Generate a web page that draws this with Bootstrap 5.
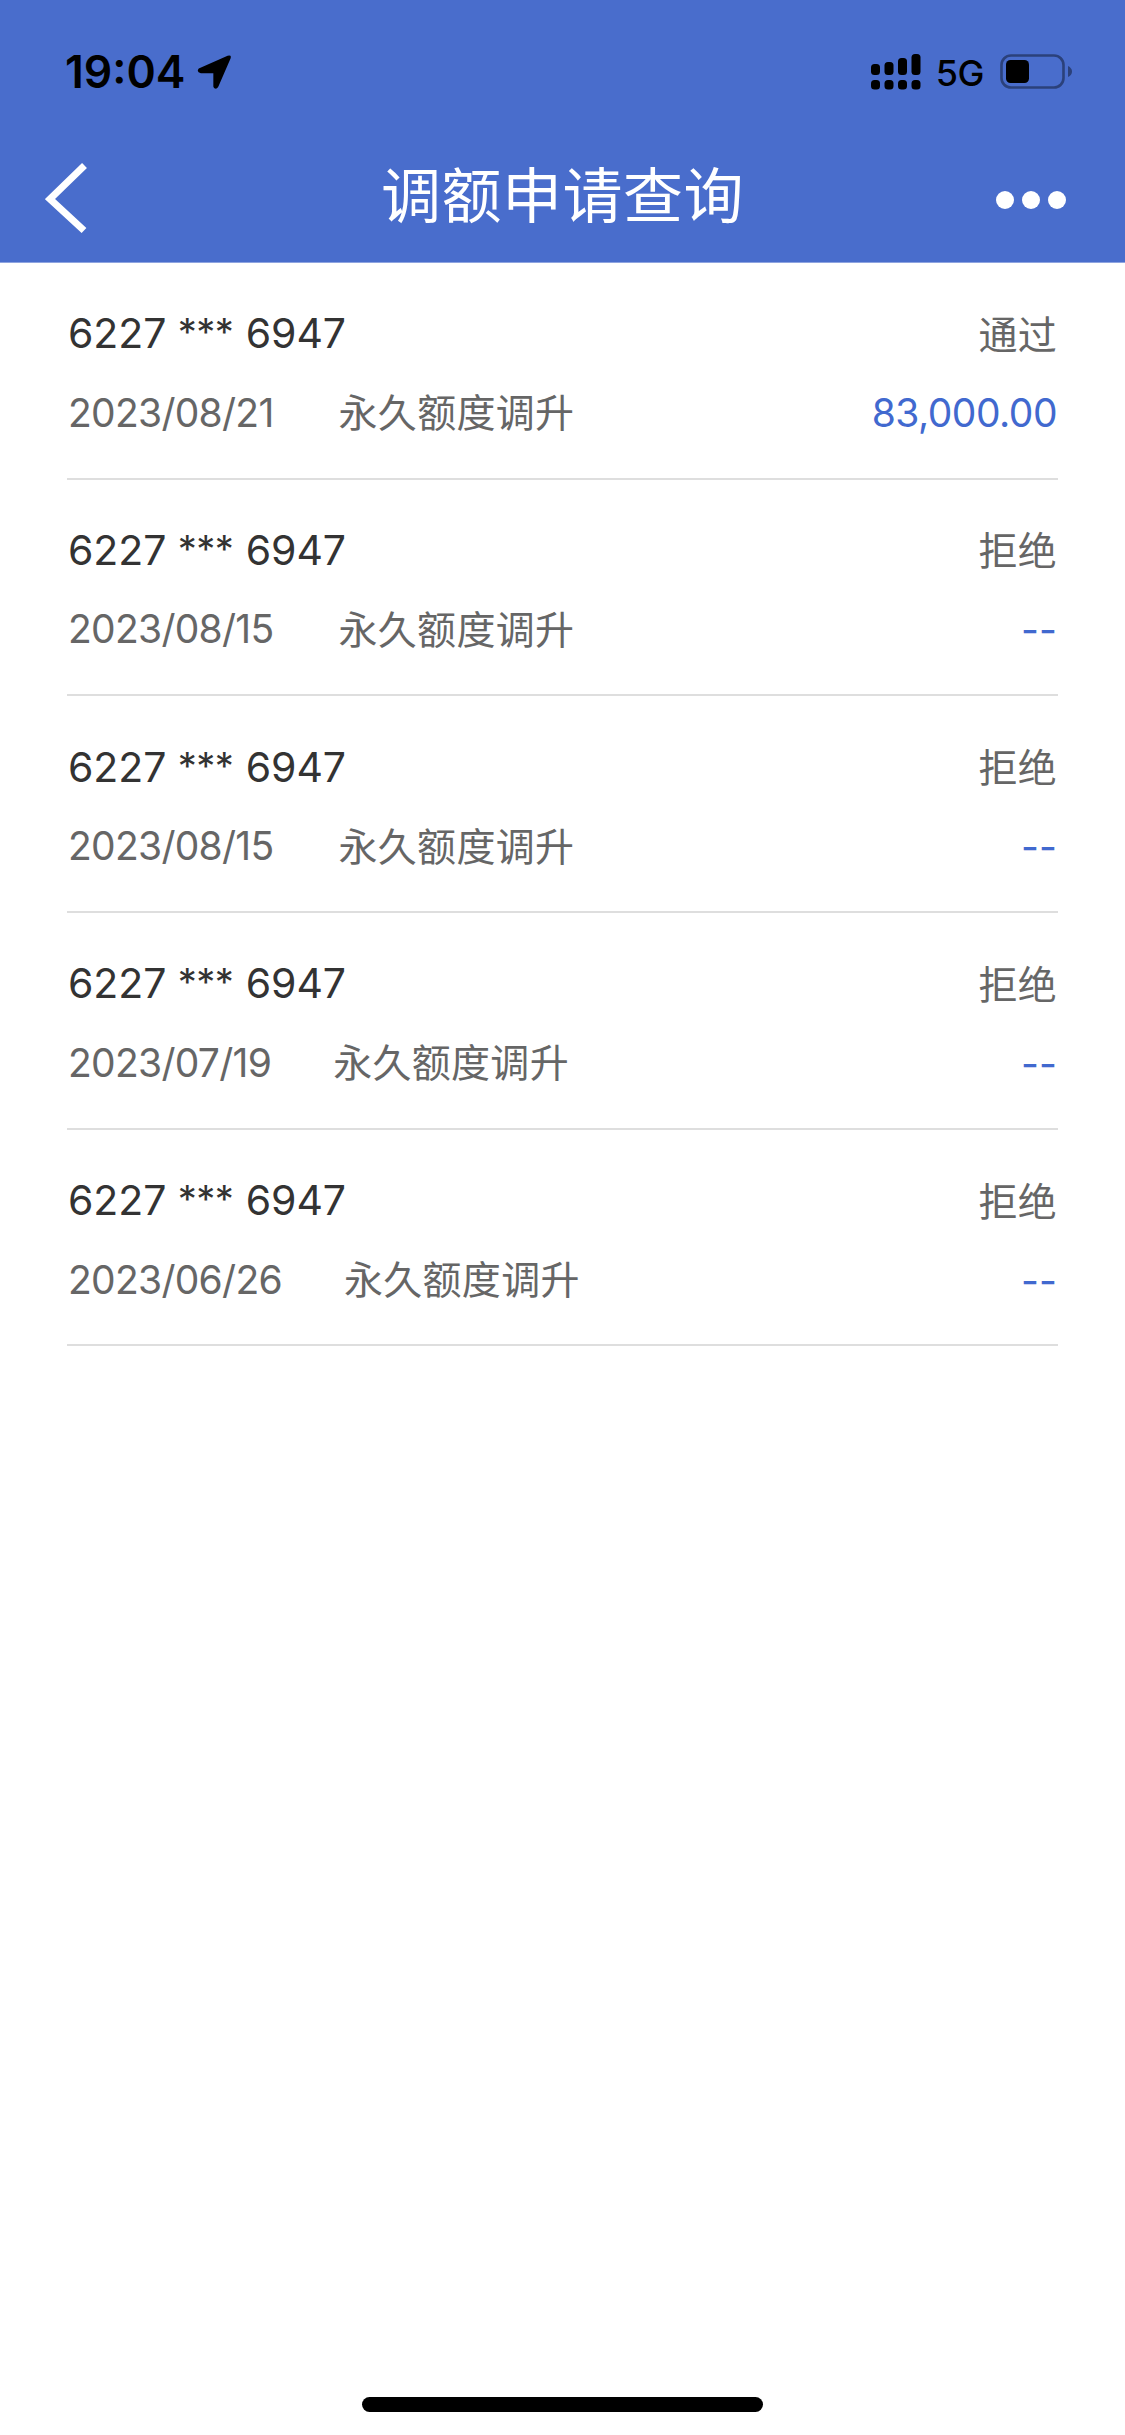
<!DOCTYPE html>
<html lang="zh-CN">
<head>
<meta charset="utf-8">
<meta name="viewport" content="width=device-width, initial-scale=1">
<title>调额申请查询</title>
<link href="https://cdn.jsdelivr.net/npm/bootstrap@5.3.0/dist/css/bootstrap.min.css" rel="stylesheet">
<style>
body{font-family:Inter,"Noto Sans CJK SC",sans-serif;color:#333;background:#fff;overflow-x:hidden}
.app-top{background:#496dcc;height:263px;border-bottom:1px solid #8ea4e0}
.status-bar{height:140px;padding:3px 53px 0 65px;color:#000}
.clock-text{font-size:44.5px;font-weight:600;line-height:1;padding-top:2px}
.net-text{font-size:36px;font-weight:500;line-height:1;margin-left:15px;margin-right:16px;letter-spacing:-.5px;padding-top:2px}
.title-bar{height:116px;padding:0 59px 0 45px}
.title-text{font-family:"Noto Sans CJK SC",sans-serif;font-size:60px;letter-spacing:.5px;line-height:1;padding-bottom:12px}
.side-slot{width:94px}
.side-slot:first-child{width:108px}
.records{padding:0 67px}
.record{height:216.7px;border-bottom:2px solid #dedede;padding-top:41px}
.line-a,.line-b{height:60px}
.line-b{margin-top:19px;color:#666}
.card-no{font-size:41px;letter-spacing:-.1px;color:#333;padding-left:1px}
.mask-stars{font-size:38px;line-height:1;letter-spacing:-.5px;vertical-align:2px;margin-right:1px}
.cn-text{font-family:"Noto Sans CJK SC",sans-serif;font-size:39px;letter-spacing:.3px;color:#666;padding-bottom:5px}
.line-a .cn-text{padding-right:1px;padding-bottom:4px}
.date-text{font-size:39px;letter-spacing:-.72px;margin-right:65px;padding-left:1px}
.date-narrow{margin-right:62px}
.amount{font-size:39px;color:#4169cf;letter-spacing:-.5px;padding-right:1px}
.amount-none{letter-spacing:0;padding-top:2px}
.home-bar{width:401px;height:15px;border-radius:8px;background:#000;margin-bottom:23px}
</style>
<script src="https://cdn.jsdelivr.net/npm/bootstrap@5.3.0/dist/js/bootstrap.bundle.min.js"></script>
</head>
<body>
<div class="d-flex flex-column min-vh-100">
<header class="app-top">
  <div class="status-bar d-flex align-items-center justify-content-between">
    <div class="d-flex align-items-center">
      <span class="clock-text">19:04</span>
      <svg class="ms-2 ps-1" width="39" height="36" viewBox="0 0 36 36"><path d="M31.500 1.200Q35.800 0 34.500 4L22 33Q20.500 36.500 17.500 34.500L16.800 33V19.300H4Q-1 18.200 1.800 14.500Z"/></svg>
    </div>
    <div class="d-flex align-items-center">
      <svg width="50" height="36" viewBox="0 0 50 36"><rect x="0" y="10" width="9" height="11" rx="3.500"/><rect x="13.500" y="8" width="9" height="13" rx="3.500"/><rect x="27" y="4" width="9" height="17" rx="3.500"/><rect x="40.500" y="0" width="9" height="21" rx="3.500"/><rect x="0" y="26" width="9" height="9.500" rx="3.500"/><rect x="13.500" y="26" width="9" height="9.500" rx="3.500"/><rect x="27" y="26" width="9" height="9.500" rx="3.500"/><rect x="40.500" y="26" width="9" height="9.500" rx="3.500"/></svg>
      <span class="net-text">5G</span>
      <svg width="72" height="35" viewBox="0 0 72 35"><rect x="1.500" y="1.500" width="62" height="32" rx="9.500" fill="none" stroke="#2b417b" stroke-width="2.600"/><rect x="6" y="6" width="23" height="23" rx="4.500"/><path d="M68 12Q72 14 72 17.500T68 23Z" fill="#2b417b"/></svg>
    </div>
  </div>
  <nav class="title-bar d-flex align-items-center justify-content-between text-white">
    <div class="side-slot"><svg width="44" height="74" viewBox="0 0 44 74"><path d="M39.500 4.500L5 38L39 69.500" fill="none" stroke="#fff" stroke-width="7"/></svg></div>
    <div class="title-text">调额申请查询</div>
    <div class="side-slot text-end"><svg width="70" height="18" viewBox="0 0 70 18" fill="#fff"><circle cx="9" cy="9" r="9"/><circle cx="35" cy="9" r="9"/><circle cx="61" cy="9" r="9"/></svg></div>
  </nav>
</header>
<main class="records flex-grow-1">
  <section class="record">
    <div class="line-a d-flex align-items-center justify-content-between"><span class="card-no">6227 <span class="mask-stars">***</span> 6947</span><span class="cn-text">通过</span></div>
    <div class="line-b d-flex align-items-center"><span class="date-text">2023/08/21</span><span class="cn-text">永久额度调升</span><span class="amount ms-auto">83,000.00</span></div>
  </section>
  <section class="record">
    <div class="line-a d-flex align-items-center justify-content-between"><span class="card-no">6227 <span class="mask-stars">***</span> 6947</span><span class="cn-text">拒绝</span></div>
    <div class="line-b d-flex align-items-center"><span class="date-text">2023/08/15</span><span class="cn-text">永久额度调升</span><span class="amount amount-none ms-auto">--</span></div>
  </section>
  <section class="record">
    <div class="line-a d-flex align-items-center justify-content-between"><span class="card-no">6227 <span class="mask-stars">***</span> 6947</span><span class="cn-text">拒绝</span></div>
    <div class="line-b d-flex align-items-center"><span class="date-text">2023/08/15</span><span class="cn-text">永久额度调升</span><span class="amount amount-none ms-auto">--</span></div>
  </section>
  <section class="record">
    <div class="line-a d-flex align-items-center justify-content-between"><span class="card-no">6227 <span class="mask-stars">***</span> 6947</span><span class="cn-text">拒绝</span></div>
    <div class="line-b d-flex align-items-center"><span class="date-text date-narrow">2023/07/19</span><span class="cn-text">永久额度调升</span><span class="amount amount-none ms-auto">--</span></div>
  </section>
  <section class="record">
    <div class="line-a d-flex align-items-center justify-content-between"><span class="card-no">6227 <span class="mask-stars">***</span> 6947</span><span class="cn-text">拒绝</span></div>
    <div class="line-b d-flex align-items-center"><span class="date-text date-narrow">2023/06/26</span><span class="cn-text">永久额度调升</span><span class="amount amount-none ms-auto">--</span></div>
  </section>
</main>
<div class="home-bar mx-auto"></div>
</div>
</body>
</html>
